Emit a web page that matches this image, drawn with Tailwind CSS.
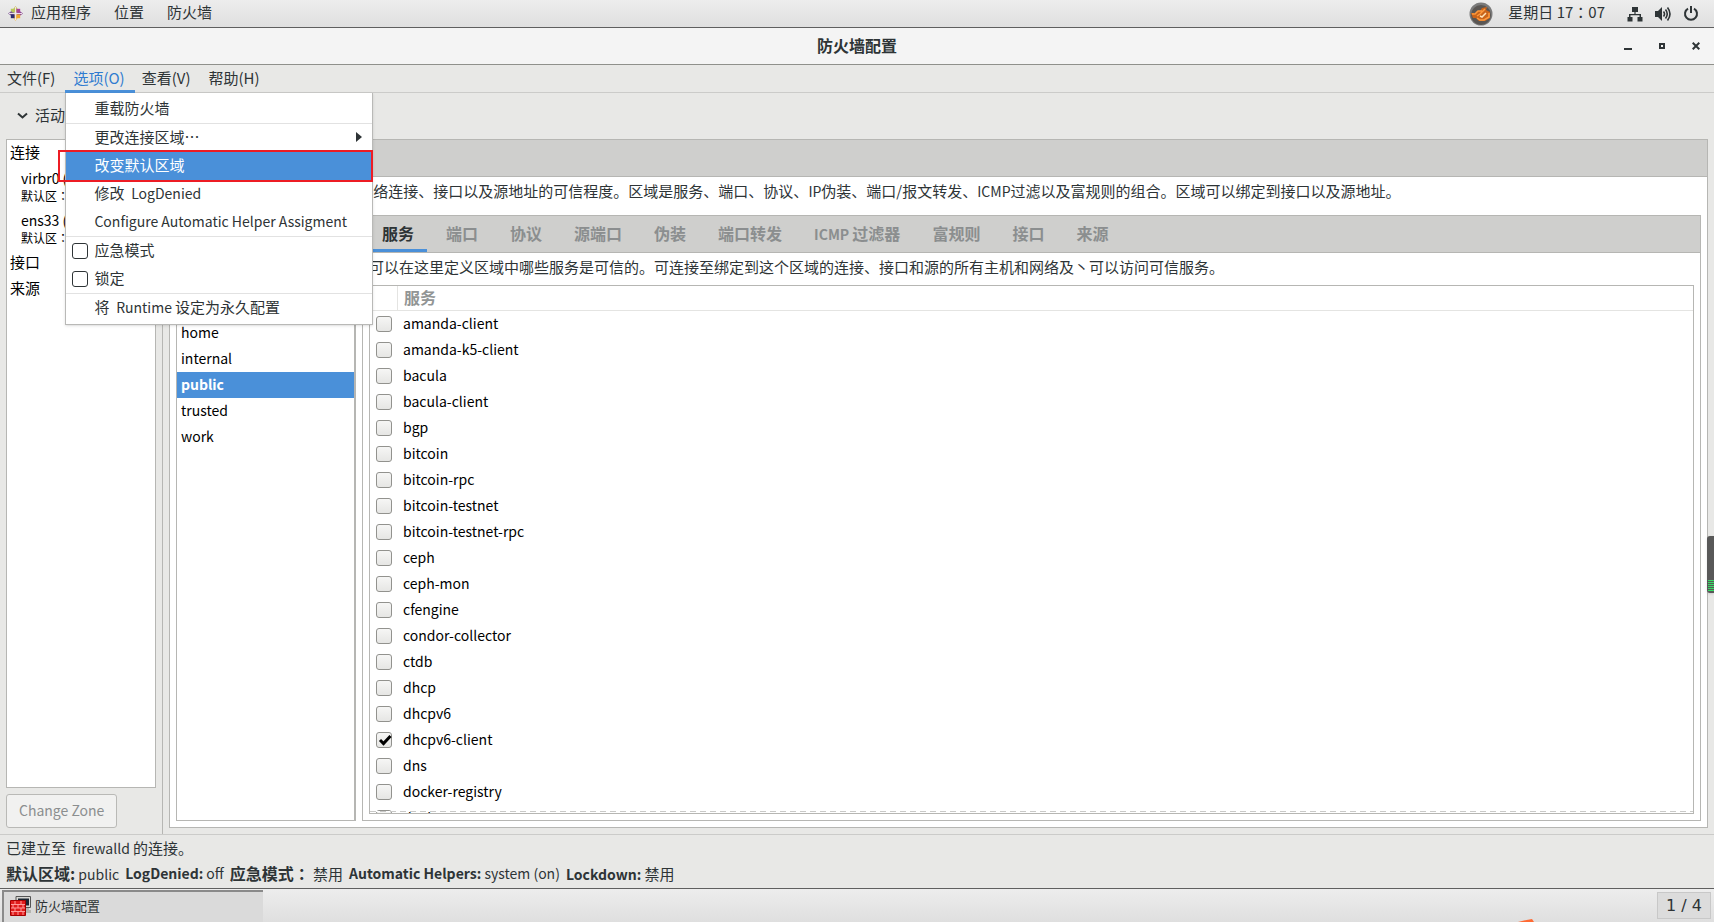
<!DOCTYPE html>
<html lang="zh-CN">
<head>
<meta charset="utf-8">
<title>防火墙配置</title>
<script src="https://cdn.jsdelivr.net/npm/@tailwindcss/browser@4"></script>
</head>
<body class="h-screen flex flex-col overflow-hidden bg-[#e8e8e6] text-[#2e3436] text-[15px] leading-5 font-['Noto_Sans_CJK_SC',sans-serif] whitespace-nowrap">

<!-- Desktop panel -->
<header class="h-7 shrink-0 flex items-center border-b border-[#5f5f5f] bg-linear-to-b from-[#ededed] to-[#dfdfdf] pl-2 pr-[15px] pb-1">
  <svg class="w-[15px] h-[15px] mr-2 mt-1" viewBox="0 0 16 16" aria-hidden="true">
    <path d="M8 0l3 4-3 4-3-4z" fill="#c9c25a"/><path d="M16 8l-4 3-4-3 4-3z" fill="#8d4a94"/><path d="M8 16l-3-4 3-4 3 4z" fill="#efc46e"/><path d="M0 8l4-3 4 3-4 3z" fill="#7d5a96"/>
    <path d="M3 3h4v4H5L3 5z" fill="#b7c95a"/><path d="M9 3h4v4H9z" fill="#a8429a"/><path d="M13 9v4H9V9z" fill="#f0a830"/><path d="M3 9h4v4H3z" fill="#2b2a6e"/>
    <path d="M8 1v14M1 8h14" stroke="#f1e6ee" stroke-width="1"/>
  </svg>
  <nav class="flex gap-[23px]">
    <button type="button">应用程序</button>
    <button type="button">位置</button>
    <button type="button">防火墙</button>
  </nav>
  <div class="ml-auto flex items-center">
    <svg class="w-6 h-6 mr-[15px] mt-1" viewBox="0 0 24 24" aria-hidden="true">
      <circle cx="12" cy="12" r="11.500" fill="#7b7b7b"/><circle cx="12" cy="13" r="10" fill="#5a5653"/>
      <path d="M2 11h3v2l3-4h3l2-3 5-1-1 3 4 2v6l-5 3h-6l-3-3H4z" fill="#c9641a"/><path d="M3 12h3l3-3h4M8 14l3-2 5-5M8 16l3 2h4l5-3v-4" fill="none" stroke="#ff9a3c" stroke-width="1.500"/><path d="M11 14l2 1 4-4" fill="none" stroke="#ffe3b8" stroke-width="1.500"/>
    </svg>
    <time class="mr-[22px]">星期日 17<span lang="ja" class="font-['Noto_Sans_CJK_JP']">：</span>07</time>
    <button type="button" aria-label="网络" class="mr-3 mt-1"><svg class="w-4 h-4" viewBox="0 0 16 16" fill="#2e3436"><path d="M5 1h6v5H8.600v2H14v3h1.500v4.500h-5V11h2V9.300h-9V11h2v4.500h-5V11H2V8h5.400V6H5z"/></svg></button>
    <button type="button" aria-label="音量" class="mr-3 mt-1"><svg class="w-4 h-4" viewBox="0 0 16 16"><path d="M0 5h3l4-4v14l-4-4H0z" fill="#2e3436"/><path d="M8.500 5.500q2 2.500 0 5M10.500 3.500q3.500 4.500 0 9M12.500 1.500q5 6.500 0 13" fill="none" stroke="#2e3436" stroke-width="1.600"/></svg></button>
    <button type="button" aria-label="电源" class="mt-1"><svg class="w-4 h-4" viewBox="0 0 16 16" fill="none" stroke="#2e3436" stroke-width="2"><path d="M5 2.600a6 6 0 1 0 6 0M8 0v7"/></svg></button>
  </div>
</header>

<!-- Window title bar -->
<div class="h-[37px] shrink-0 grid grid-cols-[1fr_auto_1fr] items-center bg-[#f4f4f4] border-b border-[#8f908b]">
  <h1 class="col-start-2 font-bold text-[16px] pb-[2px]">防火墙配置</h1>
  <div class="flex justify-end items-center gap-[26px] pr-[14px]">
    <button type="button" aria-label="最小化"><svg class="w-2 h-2" viewBox="0 0 8 8" shape-rendering="crispEdges"><path d="M0 6h8v2H0z" fill="#2e3436"/></svg></button>
    <button type="button" aria-label="最大化"><svg class="w-2 h-2" viewBox="0 0 8 8" shape-rendering="crispEdges"><path d="M2 2h4v4H2z" fill="none" stroke="#2e3436" stroke-width="2"/></svg></button>
    <button type="button" aria-label="关闭"><svg class="w-2 h-2" viewBox="0 0 8 8"><path d="M.7.700l6.600 6.600M7.300.700L.7 7.300" stroke="#2e3436" stroke-width="2"/></svg></button>
  </div>
</div>

<!-- Menu bar -->
<nav class="relative z-10 h-7 shrink-0 flex border-b border-[#cbcbc9]">
  <button type="button" class="pl-[7px] pr-[10px] pb-[2px]">文件(F)</button>
  <div class="relative">
    <button type="button" aria-expanded="true" class="h-7 pl-2 pr-[10px] text-[#2f7bd0] border-b-3 border-[#4a90d9]">选项(O)</button>
    <div role="menu" class="absolute left-0 top-7 w-[308px] pb-[2px] bg-white border border-t-0 border-[#b9b9b7] shadow-sm [&>*]:h-7 [&>*]:flex [&>*]:items-center [&>*]:w-full [&>*]:pb-[2px]">
      <button type="button" role="menuitem" class="mt-[2px] pl-7">重载防火墙</button>
      <hr class="h-px! border-[#e2e2e2] pb-0!">
      <button type="button" role="menuitem" class="pl-7 pr-[10px] justify-between">更改连接区域⋯<svg class="w-[6px] h-[10px]" viewBox="0 0 6 10"><path d="M0 0l6 5-6 5z" fill="#2e3436"/></svg></button>
      <button type="button" role="menuitem" class="relative bg-[#4a90d9] text-white pl-7">改变默认区域<span class="absolute -left-2 -right-px -top-[2px] -bottom-[2px] border-2 border-[#ed1c24]"></span></button>
      <button type="button" role="menuitem" class="pl-7 whitespace-pre">修改  <span class="text-[14px]">LogDenied</span></button>
      <button type="button" role="menuitem" class="pl-7 text-[14px]">Configure Automatic Helper Assigment</button>
      <hr class="h-px! border-[#e2e2e2] pb-0!">
      <label class="pl-[6px]"><input type="checkbox" class="appearance-none w-4 h-4 mr-[6px] mt-[2px] border border-[#2e3436] rounded-[3px]">应急模式</label>
      <label class="pl-[6px]"><input type="checkbox" class="appearance-none w-4 h-4 mr-[6px] mt-[2px] border border-[#2e3436] rounded-[3px]">锁定</label>
      <hr class="h-px! border-[#e2e2e2] pb-0!">
      <button type="button" role="menuitem" class="pl-7 whitespace-pre">将  <span class="text-[14px]">Runtime </span>设定为永久配置</button>
    </div>
  </div>
  <button type="button" class="pl-[7px] pr-[10px] pb-[2px]">查看(V)</button>
  <button type="button" class="pl-2 pr-[10px] pb-[2px]">帮助(H)</button>
</nav>

<main class="flex-1 min-h-0 flex flex-col">
  <button type="button" class="h-[46px] shrink-0 flex items-center gap-[7px] pl-[17px] pb-[2px]"><svg class="w-[11px] h-2 mt-[2px]" viewBox="0 0 11 8"><path d="M1 1.500l4.500 4 4.500-4" fill="none" stroke="#2e3436" stroke-width="2"/></svg>活动的绑定</button>
  <div class="flex-1 min-h-0 flex">

    <!-- Active bindings -->
    <section class="w-[162px] shrink-0 flex flex-col gap-[6px] pl-[6px] pr-[6px] pb-[6px]">
      <ul class="flex-1 overflow-hidden bg-white border border-[#b6b6b3] text-black">
        <li class="h-[26px] pl-[3px] leading-6">连接</li>
        <li class="h-[42px] pl-[14px] pt-[2px] text-[14px]">virbr0 (virbr0)<div class="text-[12px] leading-4">默认区<span lang="ja" class="font-['Noto_Sans_CJK_JP']">：</span>public</div></li>
        <li class="h-[42px] pl-[14px] pt-[2px] text-[14px]">ens33 (ens33)<div class="text-[12px] leading-4">默认区<span lang="ja" class="font-['Noto_Sans_CJK_JP']">：</span>public</div></li>
        <li class="h-[26px] pl-[3px] leading-6">接口</li>
        <li class="h-[26px] pl-[3px] leading-6">来源</li>
      </ul>
      <button type="button" disabled class="self-start h-[34px] px-3 pb-[2px] border border-[#b9b9b6] rounded-[3px] bg-[#f1f1f0] text-[14px] text-[#8b8e8f]">Change Zone</button>
    </section>

    <section class="flex-1 min-w-0 border-l border-[#b6b6b3] pl-[6px] pr-[6px] pb-[6px] flex">
      <div class="flex-1 min-w-0 flex flex-col border border-[#b6b6b3] bg-white">
        <div class="h-[37px] shrink-0 border-b border-[#b6b6b3] bg-[#cfcfcd]"></div>
        <p class="h-[38px] shrink-0 pl-1 pt-1"><span class="text-[14px]">FirewallD </span>区域定义了绑定的网络连接、接口以及源地址的可信程度。区域是服务、端口、协议、<span class="text-[14px]">IP</span>伪装、端口/报文转发、<span class="text-[14px]">ICMP</span>过滤以及富规则的组合。区域可以绑定到接口以及源地址。</p>
        <div class="flex-1 min-h-0 flex gap-[6px] px-[6px] pb-[6px]">

          <!-- Zones -->
          <ul class="w-[180px] shrink-0 bg-white border border-r-2 border-[#b6b6b3] text-black text-[14px] leading-6 [&>li]:h-[26px] [&>li]:pl-1">
            <li>block</li><li>dmz</li><li>drop</li><li>external</li><li>home</li><li>internal</li>
            <li aria-selected="true" class="bg-[#4a90d9] text-white font-bold">public</li>
            <li>trusted</li><li>work</li>
          </ul>

          <!-- Zone settings -->
          <div class="flex-1 min-w-0 flex flex-col border border-[#b6b6b3]">
            <div role="tablist" class="h-[37px] shrink-0 flex gap-[6px] pl-[6px] border-b border-[#b6b6b3] bg-[#cfcfcd] text-[16px] font-bold text-[#8b8e8f] [&>button]:px-[13px] [&>button]:pb-[2px]">
              <button type="button" role="tab" aria-selected="true" class="text-[#2e3436] border-b-3 border-[#4a90d9] pt-[3px]">服务</button>
              <button type="button" role="tab">端口</button>
              <button type="button" role="tab">协议</button>
              <button type="button" role="tab">源端口</button>
              <button type="button" role="tab">伪装</button>
              <button type="button" role="tab">端口转发</button>
              <button type="button" role="tab"><span class="text-[14px]">ICMP </span>过滤器</button>
              <button type="button" role="tab">富规则</button>
              <button type="button" role="tab">接口</button>
              <button type="button" role="tab">来源</button>
            </div>
            <p class="h-8 shrink-0 pl-[6px] pt-1">可以在这里定义区域中哪些服务是可信的。可连接至绑定到这个区域的连接、接口和源的所有主机和网络及丶可以访问可信服务。</p>
            <div class="relative flex-1 min-h-0 overflow-hidden mx-[6px] mb-[6px] border border-[#b6b6b3] bg-white">
              <table class="w-full border-separate border-spacing-0 text-black">
                <thead><tr class="text-[#929595]">
                  <th class="w-7 h-[25px] p-0 border-r border-b border-[#e4e4e2]"></th><th class="h-[25px] p-0 pl-[6px] pb-[2px] border-b border-[#e4e4e2] text-left text-[16px] font-bold leading-5">服务</th>
                </tr></thead>
                <tbody id="services"></tbody>
              </table>
              <div class="absolute inset-x-0 bottom-px h-px bg-[repeating-linear-gradient(90deg,#c9c9c7_0_6px,#ffffff_6px_10px)]"></div>
            </div>
          </div>
        </div>
      </div>
    </section>
  </div>
</main>

<!-- Status -->
<footer class="shrink-0 h-[54px] border-t border-[#cbcbc9] pl-[6px] leading-[25px]">
  <p class="whitespace-pre">已建立至  <span class="text-[14px]">firewalld </span>的连接。</p>
  <p class="flex gap-[6px] text-[14px]"><span><b class="text-[16px]">默认区域:</b> public</span><span><b>LogDenied:</b> off</span><span><b class="text-[16px]">应急模式<span lang="ja" class="font-['Noto_Sans_CJK_JP']">：</span></b> <span class="text-[15px]">禁用</span></span><span><b>Automatic Helpers:</b> system (on)</span><span><b>Lockdown:</b> <span class="text-[15px]">禁用</span></span></p>
</footer>

<!-- Task bar -->
<div class="relative shrink-0 h-[34px] flex items-center justify-between border-t border-[#5f5f5f] bg-linear-to-b from-[#ededed] to-[#dfdfdf] pl-[2px] pr-[3px]">
  <button type="button" class="h-8 w-[261px] flex items-center gap-1 pl-[6px] pb-[2px] text-[13px] bg-[#dadada] border-t-2 border-l-2 border-[#8a8a8a]">
    <svg class="w-[21px] h-5" viewBox="0 0 21 20" aria-hidden="true"><path d="M6 .5h14.500v11H6z" fill="#d8d8d4" stroke="#555"/><path d="M8 2.500h11v7H8z" fill="#1c2733"/><path d="M15 12h4v2h2v3h-6z" fill="#b5b5b0"/><path d="M.5 4.500h15v15H.5z" fill="#e01b1b" stroke="#a30000"/><path d="M1 8.500h14M1 12h14M1 15.500h14M5 5v3M11 5v3M3 9v3M8 9v3M13 9v3M5 12v3M11 12v3M3 16v3M8 16v3M13 16v3" stroke="#ff9a9a"/></svg>防火墙配置</button>
  <button type="button" class="h-[27px] w-[54px] border border-[#c8c8c8] bg-[#dcdcdc] text-[16px] font-['DejaVu_Sans',sans-serif]">1 / 4</button>
  <svg class="absolute right-[180px] bottom-0 w-4 h-[3px]" viewBox="0 0 16 3" aria-hidden="true"><path d="M0 3q7-2 14-3l2 3z" fill="#ff6a33"/></svg>
</div>

<!-- System monitor tab docked to the screen edge -->
<div class="absolute right-0 top-[536px] w-[7px] h-[57px] rounded-l-[3px] bg-[#585858] flex flex-col justify-end pb-px pl-px shadow"><div class="h-3 bg-[repeating-linear-gradient(180deg,#35dd63_0_1px,#585858_1px_2px)]"></div></div>

<template id="service-row">
  <tr>
    <td class="h-[26px] p-0 pl-[6px]"><span class="relative block w-4 h-4"><input type="checkbox" class="peer block appearance-none w-4 h-4 border border-[#92928e] rounded-[3px] bg-linear-to-b from-[#f6f6f5] to-[#e6e6e4]"><svg class="hidden peer-checked:block absolute inset-0 pointer-events-none" viewBox="0 0 16 16"><path d="M4 8l3.500 3.500L14.500 4" fill="none" stroke="#000" stroke-width="3"/></svg></span></td>
    <td class="h-[26px] p-0 pb-[2px] pl-[5px] text-[14px] leading-6"><label class="block"></label></td>
  </tr>
</template>
<script>
  const names = ['amanda-client','amanda-k5-client','bacula','bacula-client','bgp','bitcoin','bitcoin-rpc','bitcoin-testnet','bitcoin-testnet-rpc','ceph','ceph-mon','cfengine','condor-collector','ctdb','dhcp','dhcpv6','dhcpv6-client','dns','docker-registry','docker-swarm'];
  const body = document.getElementById('services');
  const row = document.getElementById('service-row');
  names.forEach(name => {
    const node = row.content.cloneNode(true);
    const input = node.querySelector('input');
    input.id = 'svc-' + name;
    input.checked = name === 'dhcpv6-client';
    const label = node.querySelector('label');
    label.htmlFor = input.id;
    label.textContent = name;
    body.appendChild(node);
  });
</script>
</body>
</html>
